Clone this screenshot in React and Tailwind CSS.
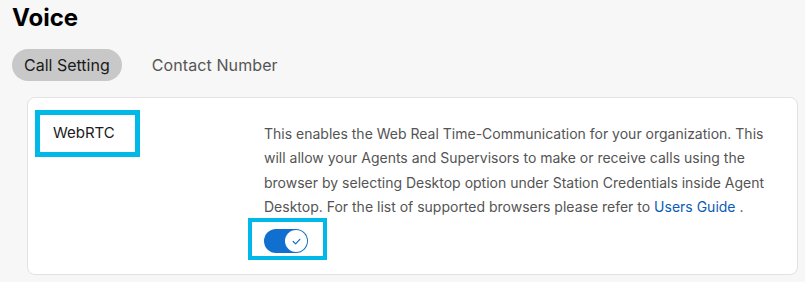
import React from 'react';

const Toggle = () => (
  <div className="w-[44px] h-[24px] rounded-full bg-[#1170cf] flex items-center justify-end pr-[1px]">
    <div className="w-[22px] h-[22px] rounded-full bg-white flex items-center justify-center">
      <svg width="11" height="11" viewBox="0 0 10 10" fill="none">
        <path d="M2 5 L4.2 7.2 L8 3" stroke="#1170cf" strokeWidth="1.1" strokeLinecap="round" strokeLinejoin="round" />
      </svg>
    </div>
  </div>
);

export default function App() {
  return (
    <div className="w-[805px] h-[282px] bg-[#f7f7f7] px-3 pt-[3px] font-['Inter',sans-serif] overflow-hidden">
      <h1 className="text-[24px] font-bold text-black leading-[30px]">Voice</h1>
      <div className="flex items-center gap-[30px] mt-[16px]">
        <button className="h-[32px] px-3 rounded-full bg-[#c8c8c8] text-[16px] text-[#1a1a1a]">
          Call Setting
        </button>
        <span className="text-[16px] tracking-[0.1px] text-[#555]">Contact Number</span>
      </div>
      <div className="ml-[15px] mt-[16px] w-[771px] h-[178px] bg-white border border-[#e2e2e2] rounded-lg flex pl-[7px] pt-[12px]">
        <div className="w-[229px] shrink-0">
          <div className="w-[105px] h-[47px] border-[5px] border-[#00b9e8] flex items-center pl-[13px] text-[15px] text-[#1a1a1a]">
            WebRTC
          </div>
        </div>
        <div className="w-[515px] pt-[12px]">
          <p className="text-[14px] leading-[24.3px] text-[#545454]">
            This enables the Web Real Time-Communication for your organization. This will allow your Agents and Supervisors to make or receive calls using the browser by selecting Desktop option under Station Credentials inside Agent Desktop. For the list of supported browsers please refer to <span className="text-[#0a5bb8]">Users Guide</span>&nbsp;.
          </p>
          <div className="-ml-[16px] mt-[-1px] w-[79px] h-[42px] border-4 border-[#00b9e8] pl-[12px] pt-[7px]">
            <Toggle />
          </div>
        </div>
      </div>
    </div>
  );
}
